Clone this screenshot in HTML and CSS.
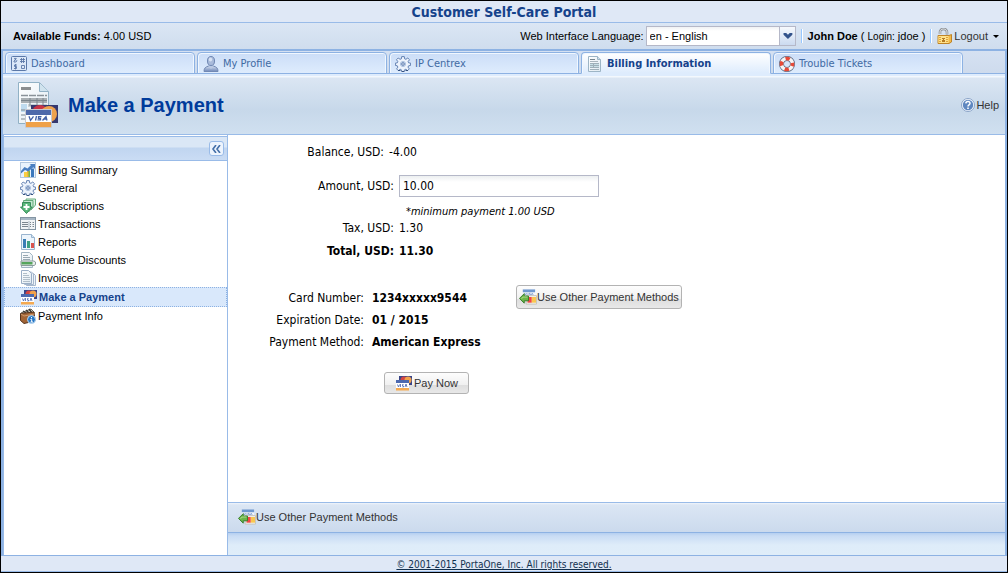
FILE: index.html
```html
<!DOCTYPE html>
<html lang="en">
<head>
<meta charset="utf-8">
<title>Customer Self-Care Portal</title>
<link rel="stylesheet" href="styles.css">
</head>
<body>
<svg class="sprite" aria-hidden="true">
  <defs>
    <linearGradient id="paper" x1="0" y1="0" x2="1" y2="1"><stop offset="0" stop-color="#ffffff"/><stop offset="1" stop-color="#dfeaf2"/></linearGradient>
    <linearGradient id="steel" x1="0" y1="0" x2="0" y2="1"><stop offset="0" stop-color="#d5dff0"/><stop offset="1" stop-color="#6f88b8"/></linearGradient>
  </defs>
  <symbol id="i-dashboard" viewBox="0 0 16 16"><rect x=".5" y=".5" width="15" height="14" rx="1" fill="#dce8f8" stroke="#5b78a8"/><path d="M5.500 4.500L3.500 3v-.6h1.700V3L3 5v1h2l1-1.500M9 3.500h5M9 5.500h5M10.500 2v5M12.500 2v5M6 9H3.500v1.500h2V12.500H3M4.500 8v5.500M10.500 9.500h3v3h-3z" fill="none" stroke="#5b78a8" stroke-width=".9"/></symbol>
  <symbol id="i-user" viewBox="0 0 16 16"><path d="M1 15.500c0-3.500 1.500-4.500 4.700-5.500h4.600c3.200 1 4.700 2 4.700 5.500z" fill="url(#steel)" stroke="#7189b4"/><path d="M6 9h4v2l-2 2-2-2z" fill="#b9c9e3"/><ellipse cx="8" cy="5" rx="3.500" ry="4.500" fill="#a9bbdb" stroke="#6e86b2"/><ellipse cx="7.500" cy="3.500" rx="1.700" ry="2" fill="#d7e2f3"/></symbol>
  <symbol id="i-gear" viewBox="0 0 16 16"><path d="M6.700.6h2.600l.3 2.200 1.300.5L12.800 2 14.500 3.700l-1.400 1.900.5 1.200 2 .3v2.300l-2 .4-.6 1.300 1.300 1.800-1.700 1.700-1.800-1.300-1.300.5-.4 1.700H6.800l-.4-1.700-1.200-.5-1.900 1.300-1.700-1.700 1.300-1.800-.6-1.300-1.900-.4V7.100l1.900-.3.5-1.200-1.300-1.900L3.200 2l1.900 1.300 1.300-.5z" fill="#edf3fc" stroke="#5676aa" stroke-width=".9"/><path d="M3 14.500h2.500M6.700 15.500h2.600M10.500 14.500H13" stroke="#35527f"/><circle cx="8" cy="8" r="2.600" fill="#d1dff3" stroke="#a2b7d8" stroke-width=".8"/><circle cx="8" cy="8" r="1.300" fill="#fff" stroke="#5676aa"/></symbol>
  <symbol id="i-doc" viewBox="0 0 16 16"><path d="M1.500.5h9l3 3v12h-12z" fill="url(#paper)" stroke="#9db5c6"/><path d="M10.500.5v3h3" fill="#cfdfea" stroke="#9db5c6"/><path d="M3 3.500h5" stroke="#77858e"/><path d="M3 5.500h8" stroke="#a9b5bd"/><path d="M3 7h9v4H3z" fill="#c8dfe6"/><path d="M3 7.500h9M3 9.500h9M3 11.500h9M3 13.500h9M6.500 7v4" stroke="#9fb0b9"/></symbol>
  <symbol id="i-ring" viewBox="0 0 16 16"><circle cx="8" cy="8" r="5.500" fill="none" stroke="#50617a" stroke-width="5"/><circle cx="8" cy="8" r="5.500" fill="none" stroke="#f7f5f5" stroke-width="3.600"/><circle cx="8" cy="8" r="5.500" fill="none" stroke="#e64a38" stroke-width="3.600" stroke-dasharray="4.320 4.320" stroke-dashoffset="2.160"/></symbol>
  <symbol id="i-lock" viewBox="0 0 16 16"><path d="M3 6V4c0-4 7-4 7 0v2.500" fill="none" stroke="#8f9398" stroke-width="2.600"/><path d="M3 6V4c0-4 7-4 7 0v2" fill="none" stroke="#dfe3e6"/><path d="M1 7.500h11l2.500-1v7.500l-2.500 1.500H1z" fill="#f2b947" stroke="#bf8427"/><path d="M1.500 8h10v7h-10z" fill="#ffe28c"/><path d="M2 9.500h2M2 11.500h2M2 13.500h2M9 9.500h2M9 11.500h2M9 13.500h2" stroke="#dfa43c"/><path d="M5 10h3v1H7v1h1v2H5v-2h1v-1H5z" fill="#b57a23"/></symbol>
  <symbol id="i-help" viewBox="0 0 16 16"><circle cx="8" cy="8" r="6.500" fill="#f5f9ff" stroke="#8ba4c8"/><circle cx="8" cy="8" r="5.200" fill="#5f87c0"/><path d="M5.800 6.400C6 3.700 10.300 3.900 10 6.500 9.800 7.900 8 7.700 8 9.400" fill="none" stroke="#fff" stroke-width="1.500"/><path d="M7.200 10.500h1.600v1.500H7.200z" fill="#fff"/></symbol>
  <symbol id="i-chart" viewBox="0 0 16 16"><rect x=".5" y=".5" width="15" height="15" fill="#eaf3fd" stroke="#b4c8df"/><path d="M4 10h3v5H4z" fill="#f9cf42"/><path d="M7 8.500h3V15H7z" fill="#f2b93c"/><path d="M8.500 8.500H10V15H8.500z" fill="#73b54c"/><path d="M11 6.500h3V15h-3z" fill="#3d79bd"/><path d="M1 9l3.500-4 3 1.500L11 3 9.500 2H15v5l-1.700-1.800-5 4.300L5 8l-4 3.500z" fill="#4b7fc1"/></symbol>
  <symbol id="i-subs" viewBox="0 0 16 16"><path d="M6 1h9.500v6L11 12l-4-4z" fill="#d8f0df" stroke="#69ad7e"/><path d="M3.500 2.500H13V9l-4.500 5-4-4z" fill="#c4e7cf" stroke="#60a877"/><path d="M2.500 4.500h8V9h1.500l-5.500 6.500L.5 9h2z" fill="#58b879" stroke="#378b59"/><path d="M6.500 6v6M3.500 9h6" stroke="#fff" stroke-width="1.800"/></symbol>
  <symbol id="i-trans" viewBox="0 0 16 16"><rect x=".5" y="1.500" width="15" height="12" fill="#f1f4f6" stroke="#8495a3"/><path d="M1 2h14v2H1z" fill="#a6b6c4"/><path d="M2 6.500h6M2 8.500h6M2 10.500h6M10 6.500h1M10 8.500h1M10 10.500h1M12.500 6.500H14M12.500 8.500H14M12.500 10.500H14" stroke="#7c8790"/><path d="M9 5v8" stroke="#aab7c2"/></symbol>
  <symbol id="i-report" viewBox="0 0 16 16"><path d="M1.500.5h10l3 3v12h-13z" fill="#edf5fc" stroke="#99b4cf"/><path d="M11.500.5v3h3" fill="#d3e3f0" stroke="#99b4cf"/><path d="M3 5h3v9H3z" fill="#397db5"/><path d="M7 7h3v7H7z" fill="#3d9f83"/><path d="M11 9h3v5h-3z" fill="#d9534f"/></symbol>
  <symbol id="i-volume" viewBox="0 0 16 16"><path d="M1.500.5h8l3 3v12h-11z" fill="url(#paper)" stroke="#a1b5c3"/><path d="M3 3.500h5M3 5.500h7M3 7.500h7" stroke="#98a8b2"/><path d="M1 9h13l1.500 1v2.500l-1.500 1H1z" fill="#e9eeee" stroke="#8b9b99"/><path d="M1.500 10h11v2.500h-11z" fill="#55a45b"/></symbol>
  <symbol id="i-invoice" viewBox="0 0 16 16"><path d="M6.500 3.500h7l2 2v10h-9z" fill="#edf3f8" stroke="#a6b7cd"/><path d="M4.500 2h7l2 2v10.500h-9z" fill="#edf3f8" stroke="#a6b7cd"/><path d="M1.500.5h7l3 3v10h-10z" fill="url(#paper)" stroke="#9aaec6"/><path d="M3 3.500h4M3 5.500h6M3 7.500h7M3 9.500h7M3 11.500h7" stroke="#b1bec9"/></symbol>
  <symbol id="i-cards" viewBox="0 0 16 16"><path d="M3 1h13v9H3z" fill="#394488"/><circle cx="8" cy="5" r="3.500" fill="#d34543"/><circle cx="12" cy="5" r="3.500" fill="#f2a24c"/><path d="M0 5h13v10H0z" fill="#fff"/><path d="M0 5h13v3H0z" fill="#4c69af"/><path d="M0 13h13v2.500H0z" fill="#f5aa51"/><path d="M1.500 9.500l1 2.500 1-2.500M4.500 9v3M7.500 9.500h-1V11h1v1h-1M9 12l1-3 1 3" fill="none" stroke="#5872b4" stroke-width=".9"/></symbol>
  <symbol id="i-wallet" viewBox="0 0 16 16"><path d="M1 5l10-4 3 3v3H1z" fill="#e3ddcb" stroke="#68665d"/><path d="M3 3l3 2M6 2l3 3M9 1l3 4" stroke="#3a3836" stroke-width="1.500"/><path d="M.5 5.500L14 4l1 9-11 2.500-3.500-3z" fill="#a16436" stroke="#57351e"/><path d="M1 6l3 2 10.500-2" fill="none" stroke="#d09b6e"/><circle cx="11.500" cy="11.500" r="4" fill="#2777c5" stroke="#bedcf5"/><path d="M11.500 9v1.300M10.500 11.500h1.200V14M10.500 14h2.500" stroke="#fff" fill="none"/></symbol>
  <symbol id="i-switch" viewBox="0 0 19 16"><path d="M4 0h13v10H4z" fill="#f4f7fb"/><path d="M4 0h13v3H4z" fill="#6e98cf"/><path d="M6 4l1 2 1-2M9.500 4v2M12 4h-1v1h1v1h-1M13 6l1-2 1 2" fill="none" stroke="#6e91c7" stroke-width=".8"/><path d="M7.500 6.500h11v9h-11z" fill="#f3f1ed" stroke="#c4c3bd"/><path d="M9 8h4.500v6H9z" fill="#f34545"/><path d="M13.500 8H18v6h-4.500z" fill="#f8c751"/><path d="M.5 9.500l5-5V7H10v5H5.500v2.500z" fill="#6cb648" stroke="#357c29"/><path d="M2.500 9.500L5 8h4" fill="none" stroke="#b4dd92"/></symbol>
  <symbol id="i-page" viewBox="0 0 40 46"><path d="M.5.5h21l9 9v32H.5z" fill="url(#paper)" stroke="#91b1c5"/><path d="M21.500 1v8.500h9" fill="#d0e3ee" stroke="#91b1c5"/><path d="M3 5h10v3H3z" fill="#8b8e90"/><path d="M3 13.500h26" stroke="#8a9299" stroke-width="1.400" stroke-dasharray="7 1"/><path d="M3 16h26v5H3z" fill="#a9afb3"/><path d="M3 22h6v8H3z" fill="#bfdbef"/><path d="M10 22h19v3H10z" fill="#c9d1d6"/><path d="M3 18.500h26M3 28h7M3 33h5M3 37h5M12 16v8M19 16v8M25 16v8" stroke="#7d878e"/><path d="M13 23h27v18H13z" fill="#35386f"/><circle cx="22" cy="31" r="8" fill="#c93445"/><circle cx="31" cy="32" r="8" fill="#efa24d"/><path d="M7.500 27.500h26v18h-26z" fill="#fff" stroke="#c7c8cf"/><path d="M8 28h25v5H8z" fill="#4e69aa"/><path d="M8 40h25v5H8z" fill="#efa149"/><path d="M11 34.300l1.500 4 3-4M18.500 34l-1 4.500M23.500 34.700h-3v1.600h2v1.600h-3M24.500 38.500l3.500-4 1 4M26 37h3" fill="none" stroke="#4260a5" stroke-width="1.300"/></symbol>
</svg>

<div class="portal">
  <header class="banner">Customer Self-Care Portal</header>

  <div class="userbar">
    <p class="funds"><b>Available Funds:</b> 4.00 USD</p>
    <label class="lang-label" for="lang">Web Interface Language:</label>
    <span class="combo">
      <select id="lang"><option>en - English</option></select>
      <svg class="combo-arrow" viewBox="0 0 17 19" aria-hidden="true"><path d="M4 6h3l2 2 2-2h3v2l-5 5-5-5z" fill="#33538b"/></svg>
    </span>
    <span class="sep"></span>
    <p class="who"><b>John Doe</b> ( <small>Login:</small> jdoe )</p>
    <span class="sep"></span>
    <button class="flat logout" type="button"><svg class="icon"><use href="#i-lock"/></svg>Logout<span class="caret"></span></button>
  </div>

  <div class="frame">
    <nav class="tabs">
      <a class="tab" href="#dashboard"><svg class="icon"><use href="#i-dashboard"/></svg>Dashboard</a>
      <a class="tab" href="#profile"><svg class="icon"><use href="#i-user"/></svg>My Profile</a>
      <a class="tab" href="#centrex"><svg class="icon"><use href="#i-gear"/></svg>IP Centrex</a>
      <a class="tab active" href="#billing"><svg class="icon"><use href="#i-doc"/></svg>Billing Information</a>
      <a class="tab" href="#tickets"><svg class="icon"><use href="#i-ring"/></svg>Trouble Tickets</a>
    </nav>

    <div class="heading">
      <svg class="page-icon"><use href="#i-page"/></svg>
      <h1>Make a Payment</h1>
      <button class="flat" type="button"><svg class="icon"><use href="#i-help"/></svg>Help</button>
    </div>

    <div class="body">
      <aside class="sidebar">
        <div class="side-head">
          <button class="collapse" type="button" aria-label="Collapse menu"><svg viewBox="0 0 9 8"><path d="M4 0L1 4l3 4M8 0L5 4l3 4" fill="none" stroke="#436fa8" stroke-width="1.600"/></svg></button>
        </div>
        <nav class="menu">
          <a href="#summary"><svg class="icon"><use href="#i-chart"/></svg>Billing Summary</a>
          <a href="#general"><svg class="icon"><use href="#i-gear"/></svg>General</a>
          <a href="#subscriptions"><svg class="icon"><use href="#i-subs"/></svg>Subscriptions</a>
          <a href="#transactions"><svg class="icon"><use href="#i-trans"/></svg>Transactions</a>
          <a href="#reports"><svg class="icon"><use href="#i-report"/></svg>Reports</a>
          <a href="#discounts"><svg class="icon"><use href="#i-volume"/></svg>Volume Discounts</a>
          <a href="#invoices"><svg class="icon"><use href="#i-invoice"/></svg>Invoices</a>
          <a class="current" href="#payment"><svg class="icon"><use href="#i-cards"/></svg>Make a Payment</a>
          <a href="#info"><svg class="icon"><use href="#i-wallet"/></svg>Payment Info</a>
        </nav>
      </aside>

      <main class="content">
        <form class="payment">
          <div class="row balance"><span>Balance, USD:</span><span>-4.00</span></div>
          <div class="amounts">
            <div class="row amount"><label for="amount">Amount, USD:</label><input id="amount" type="text" value="10.00"></div>
            <div class="row note"><em>*minimum payment 1.00 USD</em></div>
            <div class="row tax"><span>Tax, USD:</span><span>1.30</span></div>
            <div class="row total"><span>Total, USD:</span><span>11.30</span></div>
          </div>
          <div class="card">
            <div class="card-rows">
              <div class="row"><span>Card Number:</span><b>1234xxxxx9544</b></div>
              <div class="row"><span>Expiration Date:</span><b>01 / 2015</b></div>
              <div class="row"><span>Payment Method:</span><b>American Express</b></div>
            </div>
            <button class="btn" type="button"><svg class="icon wide"><use href="#i-switch"/></svg>Use Other Payment Methods</button>
          </div>
          <button class="btn pay" type="submit"><svg class="icon"><use href="#i-cards"/></svg>Pay Now</button>
        </form>
        <div class="toolbar">
          <button class="flat" type="button"><svg class="icon wide"><use href="#i-switch"/></svg>Use Other Payment Methods</button>
        </div>
        <div class="strip"></div>
      </main>
    </div>
  </div>

  <footer class="footer"><a href="#copyright">© 2001-2015 PortaOne, Inc. All rights reserved.</a></footer>
</div>
</body>
</html>
```
FILE: styles.css
```css
* { box-sizing: border-box; }

body {
  margin: 0;
  font: 11px/14px "Liberation Sans", Arial, sans-serif;
  color: #000;
}

p, h1 { margin: 0; }
a { color: inherit; text-decoration: none; }
button, select, input { font: inherit; color: inherit; margin: 0; }

.sprite { position: absolute; width: 0; height: 0; }
.icon { width: 16px; height: 16px; flex: none; }
.icon.wide { width: 18px; }

.portal {
  min-height: 100vh;
  display: flex;
  flex-direction: column;
  border: 1px solid #000;
  background: #dfe8f6;
}

.banner {
  height: 22px;
  border-bottom: 1px solid #99bbe8;
  font: bold 14px/22px "DejaVu Sans Condensed", Tahoma, sans-serif;
  color: #15428b;
  text-align: center;
}

.userbar {
  height: 26px;
  display: flex;
  align-items: center;
  padding: 0 8px 0 12px;
  background: linear-gradient(#dbe6f4, #cfddee);
}
.funds { flex: 1; }
.lang-label { margin-right: 2px; }
.combo { position: relative; width: 150px; height: 20px; }
.combo select {
  appearance: none;
  width: 100%;
  height: 100%;
  padding: 0 20px 0 3px;
  border: 1px solid #b5b8c8;
  border-radius: 0;
  background: linear-gradient(#f0f2f4, #fff 4px);
}
.combo-arrow {
  position: absolute;
  top: 0;
  right: 0;
  width: 17px;
  height: 20px;
  border: 1px solid #b5b8c8;
  background: linear-gradient(#f6f9fd, #cbdaf0);
  pointer-events: none;
}
.sep {
  width: 2px;
  height: 14px;
  margin: 0 5px;
  border-left: 1px solid #98c8ff;
  background: #fff;
}
.who small { font-size: 10px; }

.flat {
  display: flex;
  align-items: center;
  padding: 0;
  border: 0;
  background: none;
  color: #333;
}
.logout { gap: 1px; }
.caret {
  margin-left: 4px;
  border: 3px solid transparent;
  border-top-color: #000;
  border-bottom: 0;
}

.frame {
  flex: 1;
  display: flex;
  flex-direction: column;
  border: solid #8db2e3;
  border-width: 2px 2px 1px;
}

.tabs {
  height: 23px;
  display: flex;
  gap: 2px;
  padding: 1px 2px 0;
  border-bottom: 1px solid #8db2e3;
  background: linear-gradient(#d5e1f2, #cedbed);
}
.tab {
  flex: 0 1 190px;
  height: 22px;
  display: flex;
  align-items: center;
  gap: 4px;
  padding: 1px 5px 0;
  border: 1px solid #8db2e3;
  border-radius: 4px 4px 0 0;
  background: linear-gradient(#cbddf7, #deecfd);
  box-shadow: inset 1px 1px #f0f7ff, inset -1px 0 #f0f7ff;
  font-family: "DejaVu Sans Condensed", Tahoma, sans-serif;
  color: #416aa3;
  white-space: nowrap;
}
.tab.active {
  border-bottom-color: #deecfd;
  background: linear-gradient(#fff, #deecfd);
  font-weight: bold;
  color: #15428b;
}

.heading {
  height: 61px;
  display: flex;
  align-items: center;
  padding: 0 6px 0 15px;
  border-top: 2px solid #deecfd;
  border-bottom: 1px solid #99bbe8;
  background: linear-gradient(#f3f8fd 1px, #dbe6f3 2px, #c7d8ea 34px, #d0e0f0);
}
.page-icon { width: 40px; height: 46px; }
.heading h1 {
  flex: 1;
  margin-left: 10px;
  font-size: 20px;
  line-height: 24px;
  color: #003b9b;
}

.body { flex: 1; display: flex; }
.sidebar {
  width: 225px;
  flex: none;
  padding-top: 1px;
  border: solid #99bbe8;
  border-width: 0 1px 0 1px;
  background: #fff;
}
.side-head {
  height: 25px;
  display: flex;
  justify-content: flex-end;
  align-items: center;
  padding: 0 3px;
  border: solid #99bbe8;
  border-width: 1px 0;
  background: linear-gradient(#dae7f6 10px, #c0d5f0 11px, #cadcf4);
}
.collapse {
  width: 15px;
  height: 15px;
  display: grid;
  place-items: center;
  padding: 0;
  border: 1px solid #99bbe8;
  border-radius: 3px;
  background: #edf4fd;
}
.collapse svg { width: 9px; height: 8px; }

.menu a {
  height: 18px;
  display: flex;
  align-items: center;
  gap: 2px;
  padding-left: 16px;
}
.menu .current {
  height: 20px;
  border: 1px dotted #8db2e3;
  background: #d9e8fb;
  font-weight: bold;
  color: #15428b;
}

.content {
  flex: 1;
  min-width: 0;
  display: flex;
  flex-direction: column;
  background: #fff;
}
.payment {
  flex: 1;
  padding: 8px 0 16px;
  font: 12px/18px "DejaVu Sans Condensed", Tahoma, sans-serif;
}
.row {
  display: grid;
  grid-template-columns: 166px 1fr;
  column-gap: 5px;
  align-items: center;
}
.row > :first-child { text-align: right; }
.balance { grid-template-columns: 156px 1fr; }
.amounts { margin-top: 14px; }
.row input {
  width: 200px;
  height: 22px;
  padding: 0 3px;
  border: 1px solid #b5b8c8;
  background: linear-gradient(#eceff0, #fff 6px);
}
.row.note { display: block; padding-left: 178px; margin-top: 6px; font-size: 11px; line-height: 17px; }
.tax { line-height: 16px; }
.total { margin-top: 6px; font-weight: bold; }

.card { display: flex; align-items: flex-start; margin-top: 25px; }
.card-rows { width: 288px; margin-top: 2px; }
.card .row { grid-template-columns: 136px 1fr; column-gap: 8px; line-height: 22px; }

.btn {
  min-height: 24px;
  display: flex;
  align-items: center;
  padding: 0 2px;
  border: 1px solid #b3b3b3;
  border-radius: 3px;
  background: linear-gradient(#fdfdfd, #f0f0f0 60%, #dedede 61%, #e8e8e8);
  font: 11px/14px "Liberation Sans", Arial, sans-serif;
  color: #333;
}
.pay { min-height: 22px; margin: 19px 0 0 156px; padding: 0 10px 0 11px; gap: 2px; }

.toolbar {
  height: 30px;
  display: flex;
  align-items: center;
  padding: 0 10px 1px;
  border-top: 1px solid #99bbe8;
  background: linear-gradient(#f0f5fb, #dbe6f4 2px, #cbdaed);
}
.strip {
  height: 23px;
  border-top: 1px solid #8db2e3;
  background: linear-gradient(#b5cff0, #c9dcf4 3px, #deecf9 12px, #dfedf9);
}

.footer {
  height: 16px;
  border-bottom: 1px solid #99bbe8;
  font: 10px/17px "DejaVu Sans Condensed", Tahoma, sans-serif;
  color: #12304f;
  text-align: center;
}
.footer a { text-decoration: underline; }
```
